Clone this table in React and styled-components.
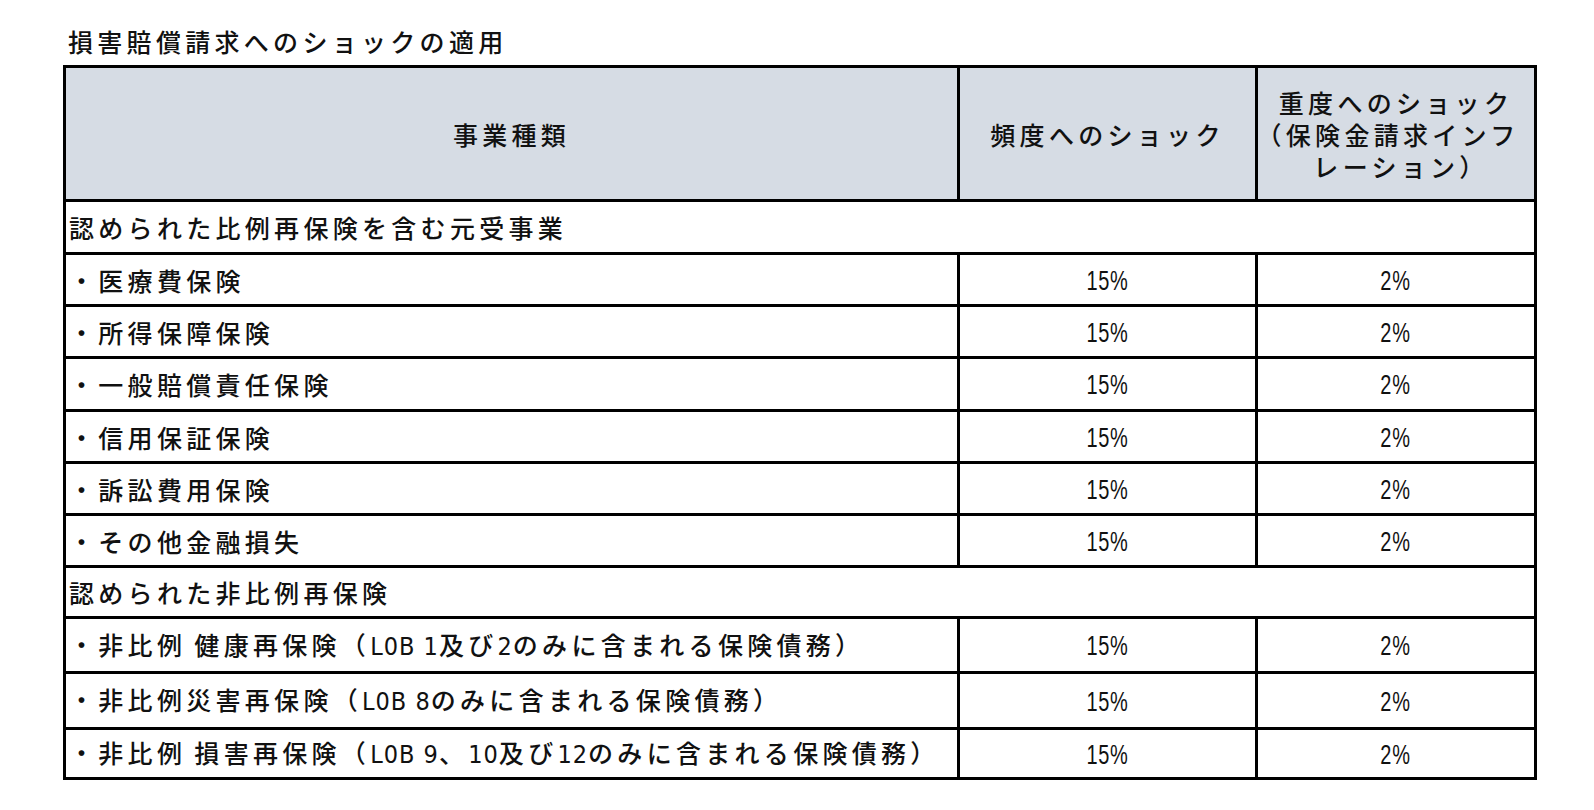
import React from "react";
import styled, { createGlobalStyle } from "styled-components";

const Global = createGlobalStyle`
  html, body { margin: 0; padding: 0; background: #ffffff; }
  body { font-family: "Noto Sans CJK JP", "Noto Sans", sans-serif; color: #111; }
`;

const Page = styled.div`
  padding: 25px 0 0 63px;
  width: 1471px;
`;

const Title = styled.h1`
  margin: 0 0 8px 0;
  padding-left: 5px;
  font-size: 25px;
  font-weight: 500;
  line-height: 32px;
  letter-spacing: 4.3px;
  color: #111;
`;

const Table = styled.table`
  width: 1471px;
  border-collapse: collapse;
  table-layout: fixed;
  font-size: 25px;
  font-weight: 500;
  letter-spacing: 4.3px;
  color: #111;
`;

const Row = styled.tr`
  height: ${(p) => p.$h}px;
`;

const HeadCell = styled.th`
  border: 3px solid #000;
  background: #d6dce4;
  font-weight: 500;
  text-align: center;
  vertical-align: middle;
  line-height: 32px;
  padding: 0;
`;

const HeadLine = styled.span`
  display: block;
  height: 32px;
  line-height: 32px;
  white-space: nowrap;
  margin: 0 ${(p) => -(p.$shift || 0)}px 0 ${(p) => p.$shift || 0}px;
`;

const SectionCell = styled.td`
  border: 3px solid #000;
  padding: 0 0 0 3px;
  text-align: left;
  vertical-align: middle;
  line-height: 32px;
`;

const LabelCell = styled.td`
  border: 3px solid #000;
  padding: 0 0 0 3px;
  text-align: left;
  vertical-align: middle;
  line-height: 32px;
  white-space: nowrap;
`;

const ValueCell = styled.td`
  border: 3px solid #000;
  padding: 0;
  text-align: center;
  vertical-align: middle;
  line-height: 32px;
`;

const Num = styled.span`
  display: inline-block;
  font-family: "Liberation Sans", Arial, sans-serif;
  font-weight: 400;
  font-size: 27px;
  letter-spacing: 1px;
  transform: scaleX(0.74);
  transform-origin: center;
`;

const Half = styled.span`
  font-family: "Liberation Sans Narrow", "DejaVu Sans Condensed", "Liberation Sans", sans-serif;
  font-weight: 400;
  letter-spacing: 1px;
`;

const data = [
  { type: "section", label: "認められた比例再保険を含む元受事業", h: 53 },
  { label: "・医療費保険", h: 52 },
  { label: "・所得保障保険", h: 52 },
  { label: "・一般賠償責任保険", h: 53 },
  { label: "・信用保証保険", h: 52 },
  { label: "・訴訟費用保険", h: 52 },
  { label: "・その他金融損失", h: 52 },
  { type: "section", label: "認められた非比例再保険", h: 51 },
  {
    label: (
      <>
        ・非比例<Half> </Half>健康再保険（<Half>L0B 1</Half>及び<Half>2</Half>のみに含まれる保険債務）
      </>
    ),
    h: 55,
  },
  {
    label: (
      <>
        ・非比例災害再保険（<Half>L0B 8</Half>のみに含まれる保険債務）
      </>
    ),
    h: 56,
  },
  {
    label: (
      <>
        ・非比例<Half> </Half>損害再保険（<Half>L0B 9</Half>、<Half>10</Half>及び<Half>12</Half>のみに含まれる保険債務）
      </>
    ),
    h: 50,
  },
];

export default function App() {
  return (
    <>
      <Global />
      <Page>
        <Title>損害賠償請求へのショックの適用</Title>
        <Table>
          <colgroup>
            <col style={{ width: 894 }} />
            <col style={{ width: 298 }} />
            <col style={{ width: 279 }} />
          </colgroup>
          <thead>
            <Row $h={134}>
              <HeadCell>事業種類</HeadCell>
              <HeadCell>頻度へのショック</HeadCell>
              <HeadCell>
                <HeadLine>重度へのショック</HeadLine>
                <HeadLine $shift={-8}>（保険金請求インフ</HeadLine>
                <HeadLine $shift={5}>レーション）</HeadLine>
              </HeadCell>
            </Row>
          </thead>
          <tbody>
            {data.map((r, i) =>
              r.type === "section" ? (
                <Row key={i} $h={r.h}>
                  <SectionCell colSpan={3}>{r.label}</SectionCell>
                </Row>
              ) : (
                <Row key={i} $h={r.h}>
                  <LabelCell>{r.label}</LabelCell>
                  <ValueCell>
                    <Num>15%</Num>
                  </ValueCell>
                  <ValueCell>
                    <Num>2%</Num>
                  </ValueCell>
                </Row>
              )
            )}
          </tbody>
        </Table>
      </Page>
    </>
  );
}
